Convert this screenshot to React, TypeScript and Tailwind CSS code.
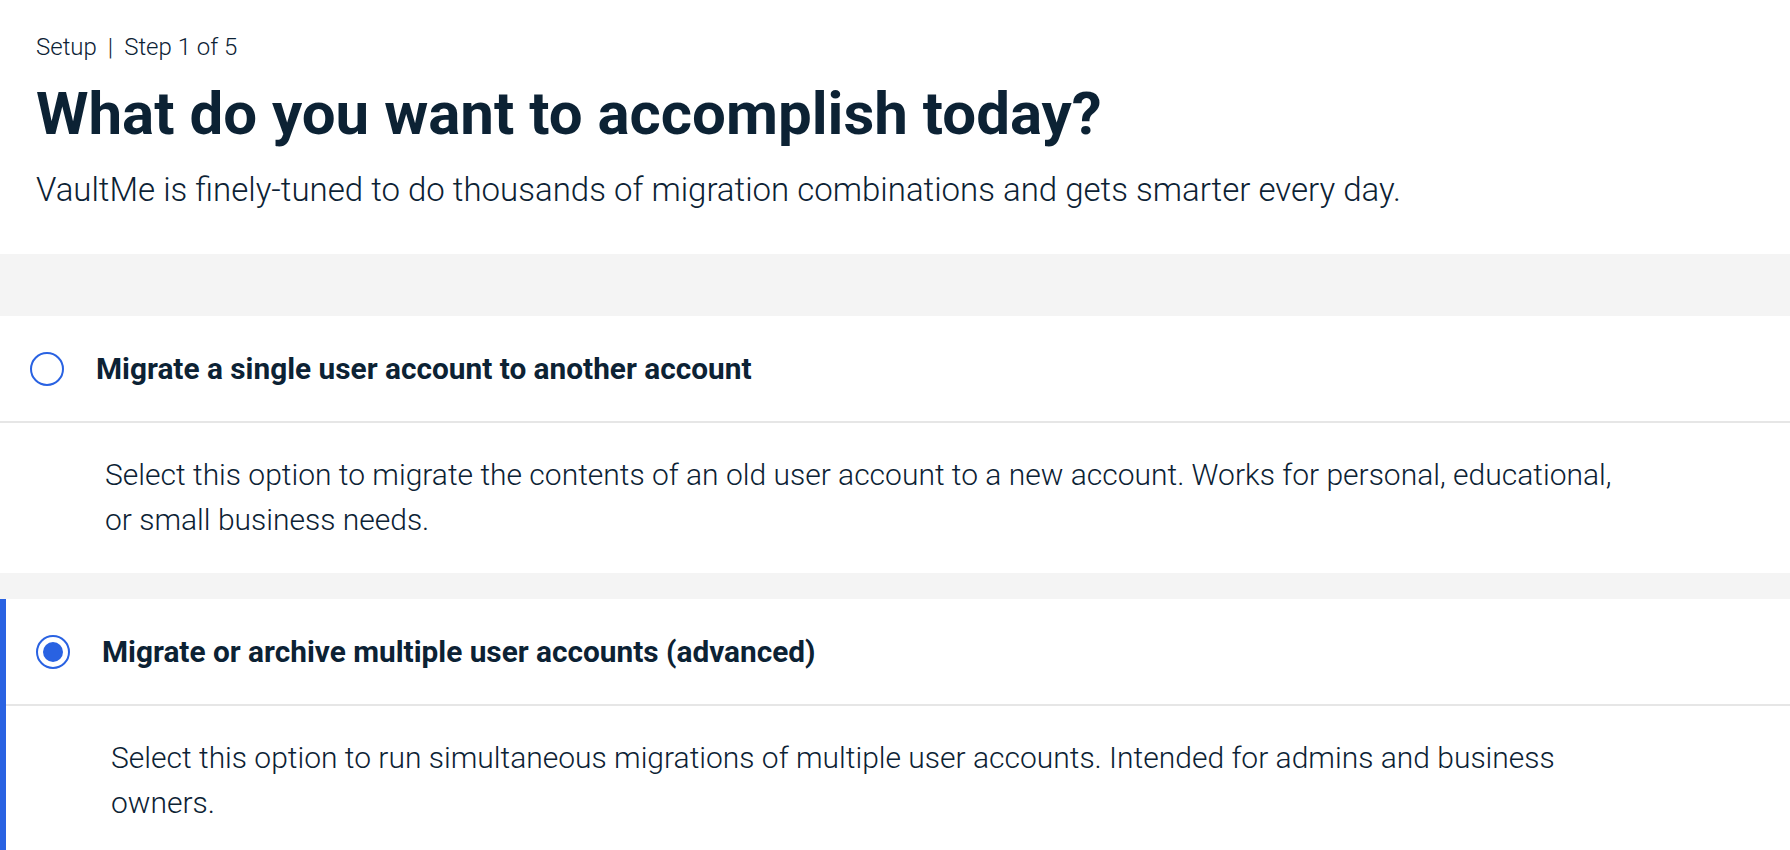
import React from "react";

type OptionProps = {
  title: string;
  description: string;
  selected?: boolean;
};

function Radio({ selected }: { selected?: boolean }) {
  return (
    <span className="flex h-[34px] w-[34px] shrink-0 items-center justify-center rounded-full border-2 border-[#2962e2] bg-white">
      {selected ? <span className="block h-[20px] w-[20px] rounded-full bg-[#2962e2]" /> : null}
    </span>
  );
}

function Option({ title, description, selected }: OptionProps) {
  return (
    <div className={`bg-white ${selected ? "border-l-[6px] border-[#2962e2]" : ""}`}>
      <div className="flex h-[107px] items-center gap-[32px] border-b-2 border-[#e6e6e6] pl-[30px]">
        <Radio selected={selected} />
        <span className="text-[29.8px] font-bold leading-[36px]">{title}</span>
      </div>
      <div className="pl-[105px] pt-[29px] pb-[31px]">
        <p className="max-w-[1523px] text-[30px] font-light leading-[45px]">{description}</p>
      </div>
    </div>
  );
}

export default function App() {
  return (
    <div className="min-h-screen bg-white font-['Roboto','Liberation_Sans',sans-serif] text-[#0c2234]">
      <div className="px-[36px] pt-[33px] pb-[44px]">
        <div className="flex items-center text-[24px] font-light leading-[28px]">
          <span>Setup</span>
          <span className="mx-[11px]">|</span>
          <span>Step 1 of 5</span>
        </div>
        <h1 className="mt-[23px] text-[60px] font-bold leading-[59px]">
          What do you want to accomplish today?
        </h1>
        <p className="mt-[27px] text-[33px] font-light leading-[40px]">
          VaultMe is finely-tuned to do thousands of migration combinations and gets smarter every day.
        </p>
      </div>
      <div className="flex flex-col gap-[26px] bg-[#f4f4f4] pt-[62px]">
        <Option
          title="Migrate a single user account to another account"
          description="Select this option to migrate the contents of an old user account to a new account. Works for personal, educational, or small business needs."
        />
        <Option
          selected
          title="Migrate or archive multiple user accounts (advanced)"
          description="Select this option to run simultaneous migrations of multiple user accounts. Intended for admins and business owners."
        />
      </div>
    </div>
  );
}
